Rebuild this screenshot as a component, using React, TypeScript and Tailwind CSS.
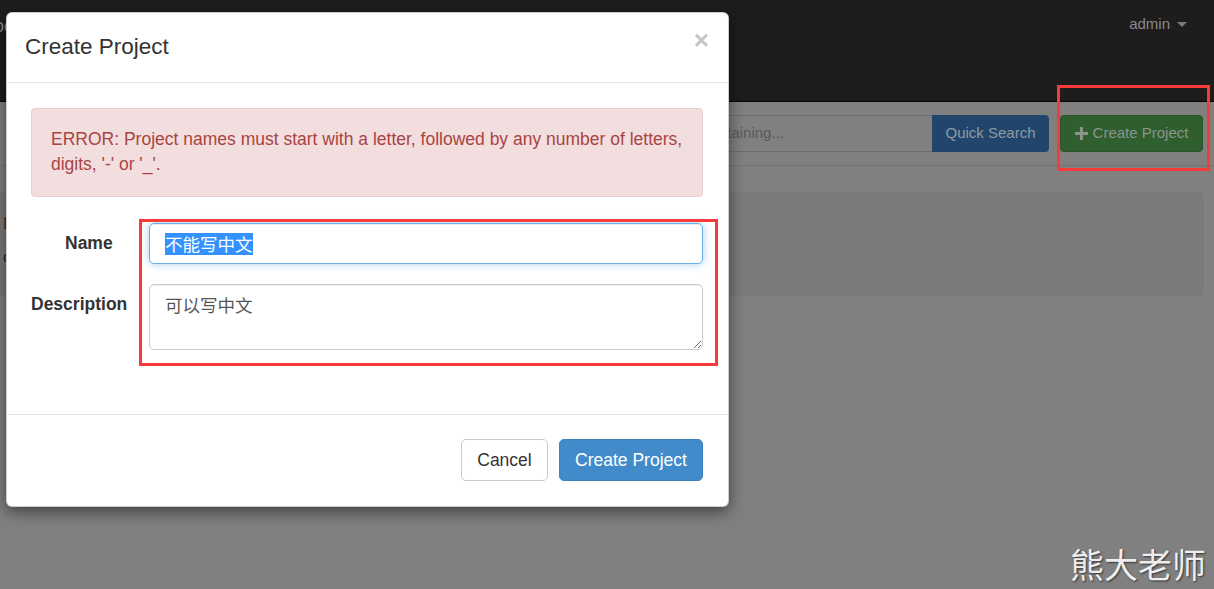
import React from 'react';

const sans = { fontFamily: '"Liberation Sans", Arial, "Noto Sans CJK SC", sans-serif' };

function PageBehind() {
  return (
    <>
      <nav className="h-[102px] bg-[#1d1d1d] border-b border-[#050505] flex items-start justify-between">
        <span className="ml-[-6px] mt-[13px] text-[18px] text-[#8a8a8a]">oc</span>
        <div className="mt-[13px] mr-[27px] flex items-center gap-[7px] text-[15px] text-[#8a8a8a]">
          <span>admin</span>
          <span className="w-0 h-0 border-l-[5px] border-r-[5px] border-t-[5px] border-l-transparent border-r-transparent border-t-[#7a7a7a]" />
        </div>
      </nav>
      <div className="h-[64px] border-b border-[#737373] flex items-center justify-end pr-[11px] gap-[11px]">
        <div className="flex h-[37px]">
          <div className="w-[374px] border border-[#6c6c6c] border-r-0 rounded-l-[4px] flex items-center pl-[14px] text-[15px] text-[#5a5a5a]">
            Search for projects containing...
          </div>
          <div className="w-[117px] bg-[#22466b] rounded-r-[4px] flex items-center justify-center text-[15px] text-[#8f9aa6]">
            Quick Search
          </div>
        </div>
        <div className="w-[143px] h-[37px] bg-[#2f5f2f] border border-[#2a552a] rounded-[4px] flex items-center justify-center gap-[5px] text-[15px] text-[#8c948c]">
          <svg width="13" height="13" viewBox="0 0 12 12">
            <path d="M4.6 0h2.8v4.6H12v2.8H7.4V12H4.6V7.4H0V4.6h4.6z" fill="#8c948c" />
          </svg>
          <span>Create Project</span>
        </div>
      </div>
      <div className="mt-[26px] mr-[11px] h-[104px] bg-[#7b7b7b] border border-[#777777] pl-[2px] pt-[18px]">
        <div className="text-[17px] leading-[25px] text-[#4a3320]">Project</div>
        <div className="mt-[10px] text-[15px] text-[#222]">created</div>
      </div>
    </>
  );
}

function Modal() {
  return (
    <div className="absolute left-[6px] top-[12px] w-[723px] bg-white rounded-[6px] border border-black/20 shadow-[0_5px_15px_rgba(0,0,0,0.5)] text-[#333]">
      <div className="h-[70px] border-b border-[#e5e5e5] flex items-center justify-between pl-[18px] pr-[19px]">
        <h4 className="text-[22.5px] leading-none text-[#333]">Create Project</h4>
        <span className="text-[26px] leading-none font-bold text-[#c6c6c6] mt-[-16px]">×</span>
      </div>

      <div className="pt-[25px] pl-[24px] pr-[25px] pb-[64px]">
        <div className="h-[89px] bg-[#f2dede] border border-[#ebccd1] rounded-[4px] px-[19px] pt-[18px] text-[17.5px] leading-[25px] text-[#a94442]">
          ERROR: Project names must start with a letter, followed by any number of letters, digits, '-' or '_'.
        </div>

        <div className="mt-[26px] grid grid-cols-[118px_1fr] gap-y-[20px]">
          <label className="pt-[8px] pl-[34px] text-[17.5px] leading-[25px] font-bold">Name</label>
          <div className="h-[41px] border border-[#66afe9] rounded-[5px] shadow-[inset_0_1px_1px_rgba(0,0,0,0.075),0_0_8px_rgba(102,175,233,0.6)] flex items-center pl-[15px]">
            <span
              className="bg-[#3392ff] text-white text-[17.5px] leading-[22px]"
              style={{ fontFamily: '"Noto Sans CJK SC", sans-serif' }}
            >
              不能写中文
            </span>
          </div>

          <label className="pt-[8px] text-[17.5px] leading-[25px] font-bold">Description</label>
          <textarea
            className="h-[66px] border border-[#cccccc] rounded-[5px] shadow-[inset_0_1px_1px_rgba(0,0,0,0.075)] px-[15px] pt-[7px] text-[17.5px] leading-[25px] text-[#555] outline-none"
            style={{ fontFamily: '"Noto Sans CJK SC", sans-serif' }}
            defaultValue="可以写中文"
          />
        </div>
      </div>

      <div className="border-t border-[#e5e5e5] pt-[24px] pb-[25px] pr-[25px] flex justify-end gap-[11px]">
        <button className="h-[42px] w-[87px] bg-white border border-[#cccccc] rounded-[5px] text-[17.5px] text-[#333]">
          Cancel
        </button>
        <button className="h-[42px] w-[144px] bg-[#428bca] border border-[#3c83c0] rounded-[5px] text-[17.5px] text-white">
          Create Project
        </button>
      </div>
    </div>
  );
}

export default function App() {
  return (
    <div className="relative w-[1214px] h-[589px] overflow-hidden bg-[#808080]" style={sans}>
      <PageBehind />
      <Modal />

      {/* red annotation boxes */}
      <div className="absolute left-[139px] top-[219px] w-[579px] h-[147px] border-[3px] border-[#f83a3a]" />
      <div className="absolute left-[1057px] top-[85px] w-[153px] h-[86px] border-[3px] border-[#f83a3a]" />

      <div
        className="absolute right-[8px] bottom-[8px] text-[34px] leading-none text-[#eeeeee] [text-shadow:1px_1px_2px_rgba(0,0,0,0.6)]"
        style={{ fontFamily: '"Noto Sans CJK SC", sans-serif' }}
      >
        熊大老师
      </div>
    </div>
  );
}
